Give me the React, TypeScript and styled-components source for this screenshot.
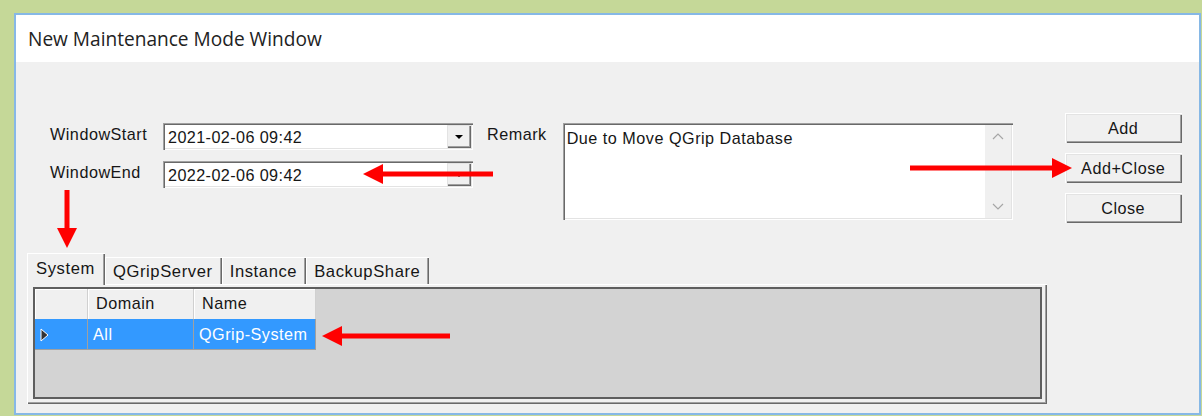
import React from "react";
import styled, { createGlobalStyle } from "styled-components";

const GlobalStyle = createGlobalStyle`
  html, body {
    margin: 0;
    padding: 0;
    background: #c5d898;
  }
  body {
    font-family: "Liberation Sans", Arial, sans-serif;
    color: #161616;
  }
`;

const uiText = `
  font-size: 16.2px;
  letter-spacing: 0.5px;
`;

const Frame = styled.div`
  padding: 13px 1px 1px 14px;
`;

const Window = styled.div`
  position: relative;
  width: 1183px;
  height: 398px;
  border: 2px solid #86b8e6;
  background: #f0f0f0;
  display: flex;
  flex-direction: column;
`;

const TitleBar = styled.div`
  height: 47px;
  background: #ffffff;
  display: flex;
  align-items: center;
  padding-left: 12px;
  font-family: "Open Sans", "Noto Sans", sans-serif;
  font-size: 19.1px;
  color: #222;
`;

const Body = styled.div`
  position: relative;
  flex: 1;
  display: flex;
  flex-direction: column;
`;

const TopRow = styled.div`
  display: flex;
  align-items: flex-start;
  padding: 51px 0 0 34px;
`;

const Fields = styled.div`
  display: grid;
  grid-template-columns: 113px 310px;
  grid-auto-rows: 27px;
  row-gap: 11px;
  margin-top: 10px;
`;

const Label = styled.span`
  ${uiText}
  padding-top: 2px;
  line-height: 18px;
`;

const Combo = styled.div`
  display: flex;
  align-items: center;
  background: #fff;
  box-shadow: inset 1px 1px 0 #a0a0a0, inset 2px 2px 0 #696969,
    inset -1px -1px 0 #ffffff, inset -2px -2px 0 #e3e3e3;
  padding: 2px;
`;

const ComboText = styled.span`
  flex: 1;
  padding: 2px 0 0 3px;
  ${uiText}
  letter-spacing: 0.4px;
`;

const DropButton = styled.div`
  width: 24px;
  height: 23px;
  display: flex;
  align-items: center;
  justify-content: center;
  background: #f0f0f0;
  box-shadow: inset 1px 1px 0 #e3e3e3, inset -1px -1px 0 #696969,
    inset -2px -2px 0 #a0a0a0;
`;

const DropArrow = styled.div`
  width: 0;
  height: 0;
  border-left: 4px solid transparent;
  border-right: 4px solid transparent;
  border-top: 4px solid #000;
  margin-top: 1px;
`;

const RemarkLabel = styled(Label)`
  margin: 10px 0 0 14px;
`;

const Memo = styled.div`
  display: flex;
  width: 450px;
  height: 97px;
  margin: 10px 0 0 16px;
  background: #fff;
  box-sizing: border-box;
  padding: 2px;
  box-shadow: inset 1px 1px 0 #a0a0a0, inset 2px 2px 0 #696969,
    inset -1px -1px 0 #ffffff, inset -2px -2px 0 #e3e3e3;
`;

const MemoText = styled.div`
  flex: 1;
  padding: 4px 0 0 2px;
  ${uiText}
`;

const ScrollBar = styled.div`
  width: 26px;
  background: #f0f0f0;
  display: flex;
  flex-direction: column;
  justify-content: space-between;
  align-items: center;
  padding: 8px 0 8px;
`;

const ButtonColumn = styled.div`
  display: flex;
  flex-direction: column;
  gap: 10px;
  margin-left: 52px;
`;

const Button = styled.button`
  width: 117px;
  height: 30px;
  border: none;
  background: #f0f0f0;
  font-family: "Liberation Sans", Arial, sans-serif;
  ${uiText}
  color: #161616;
  padding: 0;
  box-shadow: inset 1px 1px 0 #ffffff, inset 2px 2px 0 #e3e3e3,
    inset -1px -1px 0 #696969, inset -2px -2px 0 #a0a0a0;
`;

const TabSection = styled.div`
  margin: 30px 0 0 11px;
`;

const TabStrip = styled.div`
  display: flex;
  align-items: flex-end;
  height: 31px;
`;

const Tab = styled.div<{ $active?: boolean }>`
  position: relative;
  z-index: ${(p) => (p.$active ? 1 : 0)};
  height: ${(p) => (p.$active ? 32 : 27)}px;
  margin-bottom: ${(p) => (p.$active ? -1 : 0)}px;
  padding: ${(p) => (p.$active ? "6px 10px 0 9px" : "5px 9px 0 8px")};
  box-sizing: border-box;
  font-size: 16.6px;
  letter-spacing: 0.6px;
  background: #f0f0f0;
  box-shadow: inset 1px 1px 0 #ffffff, inset -1px 0 0 #696969,
    inset -2px 0 0 #a0a0a0;
`;

const TabPage = styled.div`
  width: 1020px;
  height: 120px;
  box-sizing: border-box;
  padding: 3px 5px 5px 6px;
  box-shadow: inset 1px 1px 0 #ffffff, inset -1px -1px 0 #696969,
    inset -2px -2px 0 #a0a0a0;
`;

const Grid = styled.div`
  height: 112px;
  box-sizing: border-box;
  border: 2px solid #5e5e5e;
  background: #d3d3d3;
  ${uiText}
`;

const GridRow = styled.div`
  display: flex;
`;

const HeaderCell = styled.div<{ $w: number }>`
  width: ${(p) => p.$w}px;
  height: 30px;
  box-sizing: border-box;
  padding: 5px 0 0 8px;
  background: #f0f0f0;
  border-right: 1px solid #d0d0d0;
  box-shadow: inset 1px 1px 0 #ffffff;
`;

const DataCell = styled.div<{ $w: number }>`
  width: ${(p) => p.$w}px;
  height: 31px;
  box-sizing: border-box;
  display: flex;
  align-items: center;
  padding: 1px 0 0 5px;
  background: #3399ff;
  color: #ffffff;
  border-right: 1px solid #a0a0a0;
  border-bottom: 1px solid #a0a0a0;
`;

const Marker = styled.div<{ $x: number; $y: number }>`
  position: absolute;
  left: ${(p) => p.$x}px;
  top: ${(p) => p.$y}px;
  line-height: 0;
  pointer-events: none;
`;

type Dir = "left" | "right" | "down";

// red callout arrow; (x, y) is the top-left of its bounding box
function Arrow({ x, y, len, dir }: { x: number; y: number; len: number; dir: Dir }) {
  const head = 20;
  const half = 10;
  const t = 2.5;
  if (dir === "down") {
    return (
      <Marker $x={x} $y={y}>
        <svg width={half * 2} height={len}>
          <rect x={half - t} y={0} width={t * 2} height={len - head + 2} fill="#ff0000" />
          <polygon points={`0,${len - head} ${half * 2},${len - head} ${half},${len}`} fill="#ff0000" />
        </svg>
      </Marker>
    );
  }
  const pts =
    dir === "left"
      ? `0,${half} ${head},0 ${head},${half * 2}`
      : `${len},${half} ${len - head},0 ${len - head},${half * 2}`;
  return (
    <Marker $x={x} $y={y}>
      <svg width={len} height={half * 2}>
        <rect
          x={dir === "left" ? head - 2 : 0}
          y={half - t}
          width={len - head + 2}
          height={t * 2}
          fill="#ff0000"
        />
        <polygon points={pts} fill="#ff0000" />
      </svg>
    </Marker>
  );
}

function Chevron({ up }: { up?: boolean }) {
  return (
    <svg width="12" height="7" viewBox="0 0 12 7">
      <polyline
        points={up ? "1,6 6,1 11,6" : "1,1 6,6 11,1"}
        fill="none"
        stroke="#a6a6a6"
        strokeWidth="1.2"
      />
    </svg>
  );
}

function RowPointer() {
  return (
    <svg width="9" height="14" viewBox="0 0 9 14">
      <polygon points="1,1 8,7 1,13" fill="#333333" stroke="#ffffff" strokeWidth="1" />
    </svg>
  );
}

function DateCombo({ value }: { value: string }) {
  return (
    <Combo>
      <ComboText>{value}</ComboText>
      <DropButton>
        <DropArrow />
      </DropButton>
    </Combo>
  );
}

const tabs = ["System", "QGripServer", "Instance", "BackupShare"];

export default function App() {
  return (
    <>
      <GlobalStyle />
      <Frame>
        <Window>
          <TitleBar>New Maintenance Mode Window</TitleBar>
          <Body>
            <TopRow>
              <Fields>
                <Label>WindowStart</Label>
                <DateCombo value="2021-02-06 09:42" />
                <Label>WindowEnd</Label>
                <DateCombo value="2022-02-06 09:42" />
              </Fields>
              <RemarkLabel>Remark</RemarkLabel>
              <Memo>
                <MemoText>Due to Move QGrip Database</MemoText>
                <ScrollBar>
                  <Chevron up />
                  <Chevron />
                </ScrollBar>
              </Memo>
              <ButtonColumn>
                <Button>Add</Button>
                <Button>Add+Close</Button>
                <Button>Close</Button>
              </ButtonColumn>
            </TopRow>

            <TabSection>
              <TabStrip>
                {tabs.map((t, i) => (
                  <Tab key={t} $active={i === 0}>
                    {t}
                  </Tab>
                ))}
              </TabStrip>
              <TabPage>
                <Grid>
                  <GridRow>
                    <HeaderCell $w={53} />
                    <HeaderCell $w={106}>Domain</HeaderCell>
                    <HeaderCell $w={122}>Name</HeaderCell>
                  </GridRow>
                  <GridRow>
                    <DataCell $w={53}>
                      <RowPointer />
                    </DataCell>
                    <DataCell $w={106}>All</DataCell>
                    <DataCell $w={122}>QGrip-System</DataCell>
                  </GridRow>
                </Grid>
              </TabPage>
            </TabSection>

            <Arrow x={347} y={102} len={130} dir="left" />
            <Arrow x={894} y={96} len={162} dir="right" />
            <Arrow x={41} y={128} len={58} dir="down" />
            <Arrow x={306} y={264} len={128} dir="left" />
          </Body>
        </Window>
      </Frame>
    </>
  );
}
